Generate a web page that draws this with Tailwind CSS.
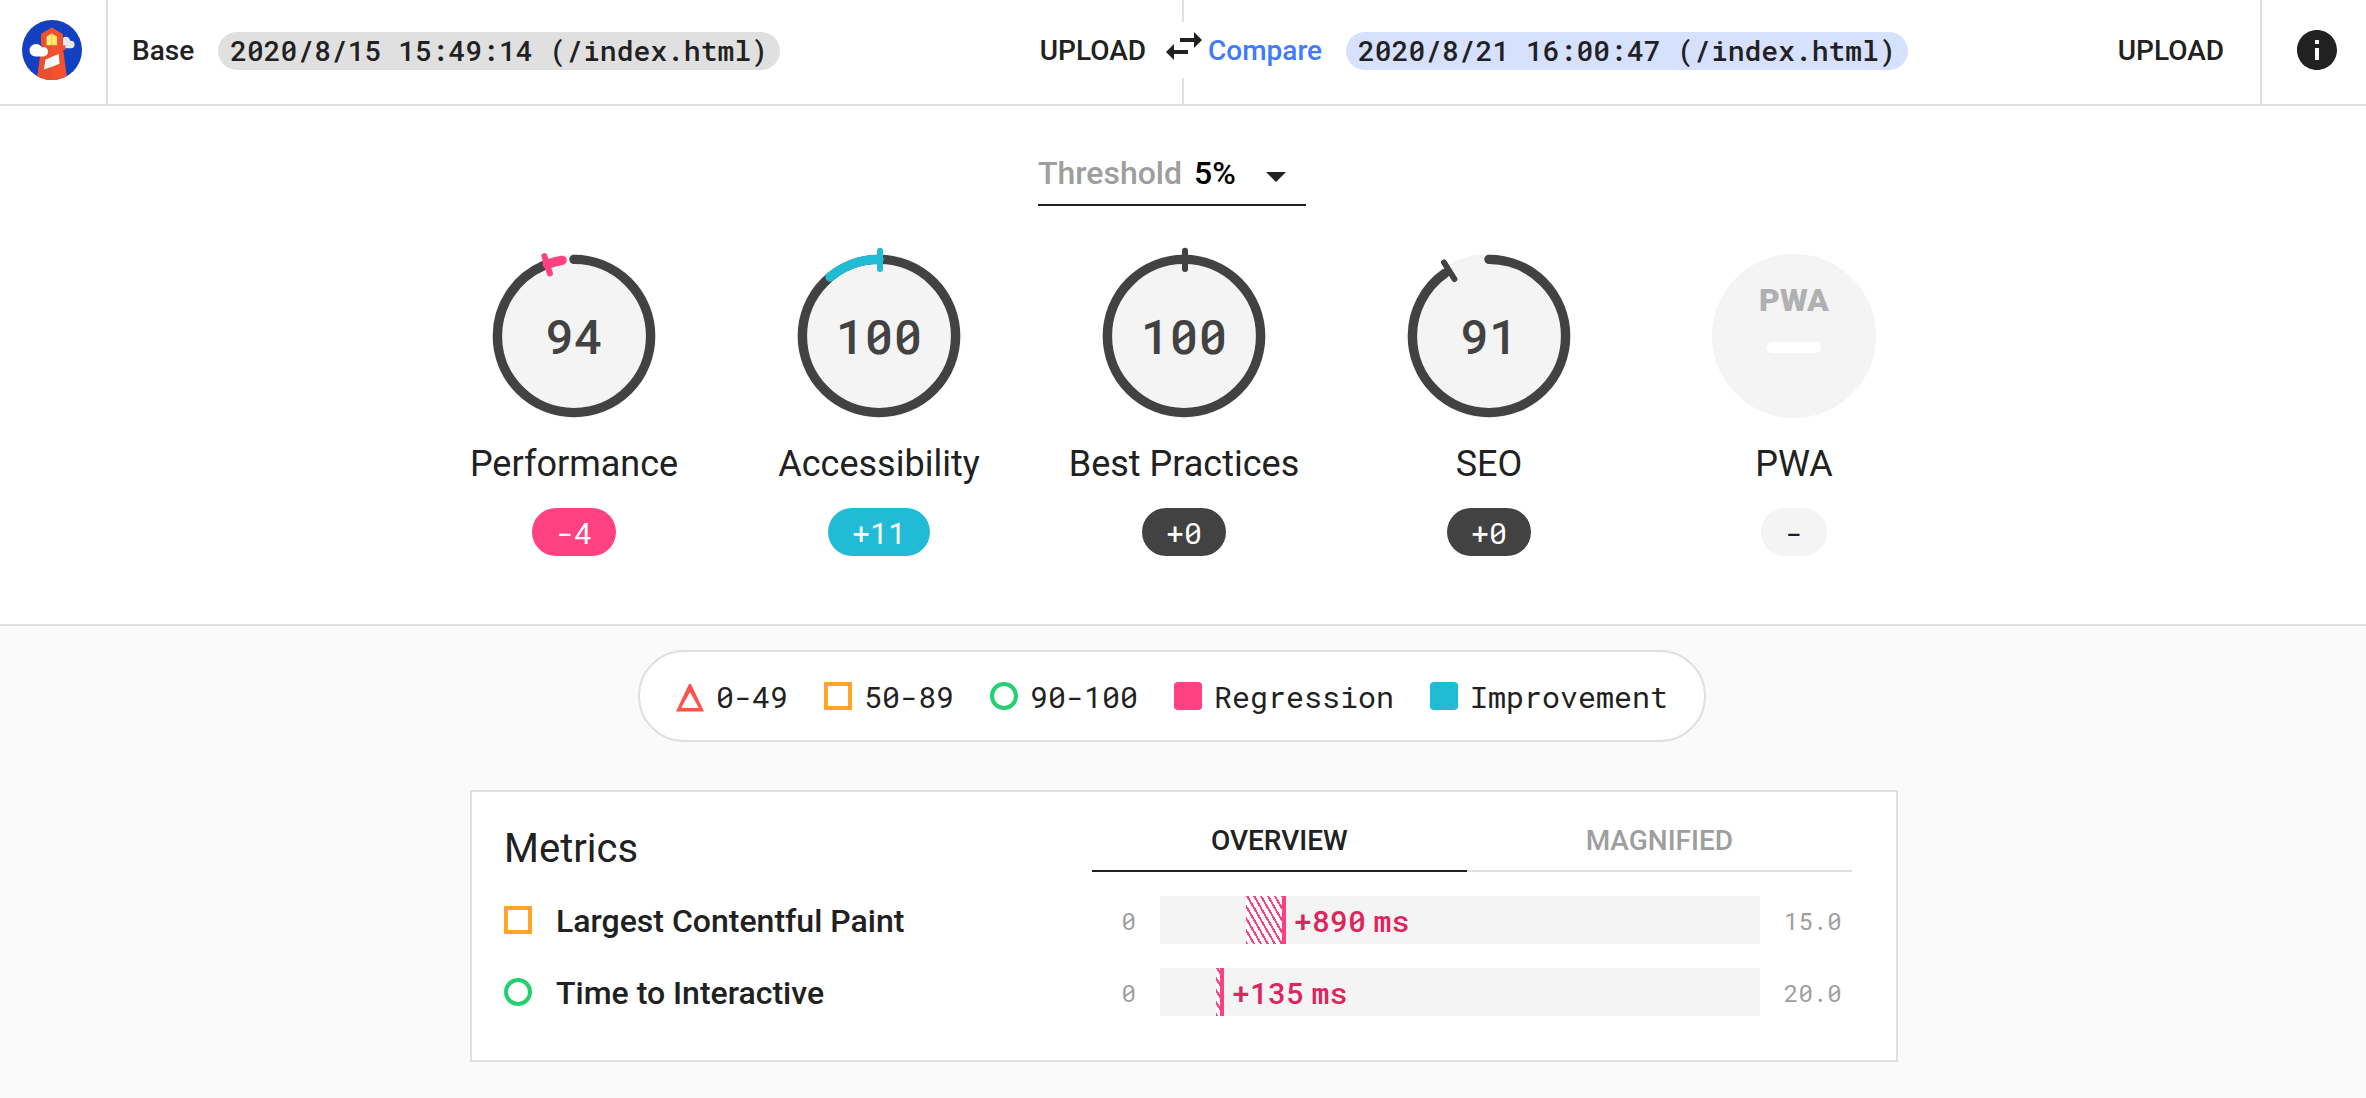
<!DOCTYPE html>
<html lang="en">
<head>
<meta charset="utf-8">
<meta name="viewport" content="width=device-width, initial-scale=1">
<title>Lighthouse CI Diff</title>
<script src="https://cdn.jsdelivr.net/npm/@tailwindcss/browser@4"></script>
</head>
<body class="min-h-screen bg-[#fafafa] font-['Roboto',sans-serif] text-[#212121]">

<header class="grid h-[106px] grid-cols-[108px_1fr_1fr_106px] border-b-2 border-[#e0e0e0] bg-white text-[28px] leading-8 font-medium">
  <a href="#" aria-label="Home" class="flex items-center justify-center border-r-2 border-[#e0e0e0] pr-0.5 pb-1">
    <svg class="size-15" viewBox="38 31 176 176" aria-hidden="true">
      <clipPath id="disc"><circle cx="126" cy="119" r="88"/></clipPath>
      <g clip-path="url(#disc)">
        <rect x="38" y="31" width="176" height="176" fill="#1340c0"/>
        <path d="M158 84a12 12 0 0 1 21 8 11 11 0 0 1 4 22h-25z" fill="#e6e8ee"/>
        <path d="M94 72l32-19 32 19v33h7v14h-6l12 90H81l13-90z" fill="#f4512f"/>
        <path d="M94 72l32-19v156H81l13-90z" fill="#e8502f"/>
        <path d="M110 80l15-10v35h-15z" fill="#fff176"/>
        <path d="M125 70l16 10v25h-16z" fill="#ffe76a"/>
        <path d="M107 147l19-8v29l-24 8z" fill="#f4f4f4"/>
        <path d="M126 139l20-8 2 28-22 9z" fill="#fff"/>
        <path d="M60 121a19 19 0 0 1 36-9 12 12 0 0 1 18 12 13 13 0 0 1-13 14H77a18 18 0 0 1-17-17z" fill="#fff"/>
      </g>
    </svg>
  </a>

  <div class="flex items-center border-r-2 border-[#e0e0e0] pr-9 pb-0.5 pl-6">
    <span>Base</span>
    <span class="ml-6 h-[38px] rounded-full bg-[#e0e0e0] px-3 font-['Roboto_Mono','DejaVu_Sans_Mono',monospace] leading-[38px] font-medium">2020/8/15 15:49:14 (/index.html)</span>
    <button class="ml-auto">UPLOAD</button>
  </div>

  <div class="relative flex items-center pr-9 pb-0.5 pl-6">
    <button aria-label="Swap base and compare" class="absolute top-[22px] -left-6 h-14 w-12 bg-white">
      <svg class="-mt-2 size-12" viewBox="0 0 24 24" fill="#212121" aria-hidden="true"><path d="M6.99 11L3 15l3.99 4v-3H14v-2H6.99v-3zM21 9l-3.99-4v3H10v2h7.01v3L21 9z"/></svg>
    </button>
    <span class="relative text-[#4179ff]">Compare</span>
    <span class="ml-6 h-[38px] rounded-full bg-[#d6e0ff] px-3 font-['Roboto_Mono','DejaVu_Sans_Mono',monospace] leading-[38px] font-medium">2020/8/21 16:00:47 (/index.html)</span>
    <button class="ml-auto">UPLOAD</button>
  </div>

  <div class="flex items-center justify-end border-l-2 border-[#e0e0e0] pr-[25px] pb-1">
    <button aria-label="About">
      <svg class="size-12" viewBox="0 0 24 24" fill="#212121" aria-hidden="true"><path d="M12 2C6.48 2 2 6.48 2 12s4.48 10 10 10 10-4.48 10-10S17.52 2 12 2zm1 15h-2v-6h2v6zm0-8h-2V7h2v2z"/></svg>
    </button>
  </div>
</header>

<section class="flex flex-col items-center border-b-2 border-[#e0e0e0] bg-white pt-9 pb-17 pl-0.5">
  <div class="mr-6 flex h-16 w-67 items-center border-b-2 border-[#212121] text-[32px] leading-10 font-medium">
    <label for="threshold" class="text-[#9e9e9e]">Threshold</label>
    <div class="grid flex-1 items-center pl-3">
      <select id="threshold" class="col-start-1 row-start-1 w-full appearance-none bg-transparent font-medium text-black">
        <option>5%</option>
        <option>10%</option>
        <option>15%</option>
      </select>
      <svg class="pointer-events-none col-start-1 row-start-1 mt-2 mr-5 h-2.5 w-5 justify-self-end" viewBox="0 0 20 10" fill="#212121" aria-hidden="true"><path d="M0 0h20L10 10z"/></svg>
    </div>
  </div>

  <div class="mt-12 flex w-full max-w-[1428px] justify-between text-[36px] leading-[44px]">
    <div class="flex w-52 flex-col items-center">
      <div class="grid size-41 place-items-center">
        <svg class="col-start-1 row-start-1 size-41 overflow-visible" viewBox="-82 -82 164 164" fill="none" stroke-linecap="round" aria-hidden="true">
          <circle r="82" fill="#f4f4f4"/>
          <g transform="rotate(-90)" stroke-width="9.4">
            <circle r="76.6" pathLength="100" stroke="#424242" stroke-dasharray="93.5 100"/>
            <circle r="76.6" pathLength="100" stroke="#ff4081" stroke-dasharray="3.2 100" stroke-dashoffset="-94.3"/>
          </g>
          <path d="M-29.6 -79.8L-24.1 -62.5" stroke="#ff4081" stroke-width="6"/>
        </svg>
        <span class="col-start-1 row-start-1 font-['Roboto_Mono','DejaVu_Sans_Mono',monospace] text-[48px] leading-[56px] font-medium text-[#424242]">94</span>
      </div>
      <h2 class="mt-6">Performance</h2>
      <span class="mt-[22px] h-12 rounded-full bg-[#ff4081] px-6 font-['Roboto_Mono','DejaVu_Sans_Mono',monospace] text-[30px] leading-[50px] text-white">-4</span>
    </div>

    <div class="flex w-52 flex-col items-center">
      <div class="grid size-41 place-items-center">
        <svg class="col-start-1 row-start-1 size-41 overflow-visible" viewBox="-82 -82 164 164" fill="none" stroke-linecap="round" aria-hidden="true">
          <circle r="82" fill="#f4f4f4"/>
          <g transform="rotate(-90)" stroke-width="9.4">
            <circle r="76.6" stroke="#424242"/>
            <circle r="76.6" pathLength="100" stroke="#21bbd5" stroke-dasharray="11 100" stroke-dashoffset="-89"/>
          </g>
          <path d="M1 -85.3V-67" stroke="#21bbd5" stroke-width="6"/>
        </svg>
        <span class="col-start-1 row-start-1 font-['Roboto_Mono','DejaVu_Sans_Mono',monospace] text-[48px] leading-[56px] font-medium text-[#424242]">100</span>
      </div>
      <h2 class="mt-6">Accessibility</h2>
      <span class="mt-[22px] h-12 rounded-full bg-[#21bbd5] px-6 font-['Roboto_Mono','DejaVu_Sans_Mono',monospace] text-[30px] leading-[50px] text-white">+11</span>
    </div>

    <div class="flex w-52 flex-col items-center">
      <div class="grid size-41 place-items-center">
        <svg class="col-start-1 row-start-1 size-41 overflow-visible" viewBox="-82 -82 164 164" fill="none" stroke-linecap="round" aria-hidden="true">
          <circle r="82" fill="#f4f4f4"/>
          <circle r="76.6" stroke="#424242" stroke-width="9.4"/>
          <path d="M1 -85.3V-67" stroke="#424242" stroke-width="6"/>
        </svg>
        <span class="col-start-1 row-start-1 font-['Roboto_Mono','DejaVu_Sans_Mono',monospace] text-[48px] leading-[56px] font-medium text-[#424242]">100</span>
      </div>
      <h2 class="mt-6 whitespace-nowrap">Best Practices</h2>
      <span class="mt-[22px] h-12 rounded-full bg-[#424242] px-6 font-['Roboto_Mono','DejaVu_Sans_Mono',monospace] text-[30px] leading-[50px] text-white">+0</span>
    </div>

    <div class="flex w-52 flex-col items-center">
      <div class="grid size-41 place-items-center">
        <svg class="col-start-1 row-start-1 size-41 overflow-visible" viewBox="-82 -82 164 164" fill="none" stroke-linecap="round" aria-hidden="true">
          <circle r="82" fill="#f4f4f4"/>
          <circle transform="rotate(-90)" r="76.6" pathLength="100" stroke="#424242" stroke-width="9.4" stroke-dasharray="90.2 100"/>
          <path d="M-45 -73.5L-34.6 -57" stroke="#424242" stroke-width="6"/>
        </svg>
        <span class="col-start-1 row-start-1 font-['Roboto_Mono','DejaVu_Sans_Mono',monospace] text-[48px] leading-[56px] font-medium text-[#424242]">91</span>
      </div>
      <h2 class="mt-6">SEO</h2>
      <span class="mt-[22px] h-12 rounded-full bg-[#424242] px-6 font-['Roboto_Mono','DejaVu_Sans_Mono',monospace] text-[30px] leading-[50px] text-white">+0</span>
    </div>

    <div class="flex w-52 flex-col items-center">
      <div class="flex size-41 flex-col items-center rounded-full bg-[#f4f4f4] pt-7">
        <span class="text-[32px] leading-9 font-black text-[#b0b0b0]">PWA</span>
        <span class="mt-6 h-[11px] w-[54px] rounded-full bg-white"></span>
      </div>
      <h2 class="mt-6">PWA</h2>
      <span class="mt-[22px] h-12 rounded-full bg-[#f4f4f4] px-6 font-['Roboto_Mono','DejaVu_Sans_Mono',monospace] text-[30px] leading-[50px]">-</span>
    </div>
  </div>
</section>

<main class="flex flex-col items-center pt-6 pb-9 pl-0.5">
  <ul class="mr-6 flex h-[92px] items-center gap-9 rounded-full border-2 border-[#e0e0e0] bg-white px-9 font-['Roboto_Mono','DejaVu_Sans_Mono',monospace] text-[30px] leading-10">
    <li class="flex items-center gap-3">
      <svg class="size-7 overflow-visible" viewBox="0 0 28 28" aria-hidden="true"><path fill="#ff5349" fill-rule="evenodd" d="M13 2h2l13 27.600H0zM14 10L5.200 26h17.600z"/></svg><span class="pt-0.5">0-49</span></li>
    <li class="flex items-center gap-3"><span class="size-7 border-4 border-[#ffa42b]"></span><span class="pt-0.5">50-89</span></li>
    <li class="flex items-center gap-3"><span class="size-7 rounded-full border-4 border-[#23cf6f]"></span><span class="pt-0.5">90-100</span></li>
    <li class="flex items-center gap-3"><span class="size-7 rounded-sm bg-[#ff4081]"></span><span class="pt-0.5">Regression</span></li>
    <li class="flex items-center gap-3"><span class="size-7 rounded-sm bg-[#21bbd5]"></span><span class="pt-0.5">Improvement</span></li>
  </ul>

  <section class="mt-12 grid w-full max-w-[1428px] grid-cols-[588fr_760fr] gap-y-6 border-2 border-[#e0e0e0] bg-white pt-6 pr-11 pb-11 pl-8 text-[32px] leading-10 font-medium">
    <h2 class="pt-3 text-[40px] leading-[42px] font-normal">Metrics</h2>
    <div role="tablist" class="flex h-14 text-[28px] leading-8">
      <button role="tab" aria-selected="true" class="flex-auto border-b-2 border-[#212121] pb-1">OVERVIEW</button>
      <button role="tab" aria-selected="false" class="flex-auto border-b-2 border-[#e0e0e0] pb-1 text-[#9e9e9e]">MAGNIFIED</button>
    </div>

    <h3 class="flex items-center gap-6"><span class="size-7 border-4 border-[#ffa42b]"></span><span class="pt-0.5">Largest Contentful Paint</span></h3>
    <div class="flex h-12 items-center font-['Roboto_Mono','DejaVu_Sans_Mono',monospace] text-[24px] font-normal text-[#9e9e9e]">
      <span class="w-17 pt-0.5 pr-6 text-right">0</span>
      <div class="flex h-12 flex-1 bg-[#f4f4f4]">
        <span style="width:14.333%"></span>
        <span class="border-r-4 border-[#ff4081] bg-[repeating-linear-gradient(60deg,#ff4081_0_2px,#fff_2px_6px)]" style="width:6.667%"></span>
        <span class="ml-2 font-['Roboto'] text-[30px] leading-[50px] font-medium text-[#e0245e]"><span class="font-['Roboto_Mono','DejaVu_Sans_Mono',monospace]">+890</span> <span class="font-['Roboto_Mono','DejaVu_Sans_Mono',monospace]">ms</span></span>
      </div>
      <span class="w-23 pt-0.5 pl-6">15.0</span>
    </div>

    <h3 class="flex items-center gap-6"><span class="size-7 rounded-full border-4 border-[#23cf6f]"></span><span class="pt-0.5">Time to Interactive</span></h3>
    <div class="flex h-12 items-center font-['Roboto_Mono','DejaVu_Sans_Mono',monospace] text-[24px] font-normal text-[#9e9e9e]">
      <span class="w-17 pt-0.5 pr-6 text-right">0</span>
      <div class="flex h-12 flex-1 bg-[#f4f4f4]">
        <span style="width:9.333%"></span>
        <span class="border-r-4 border-[#ff4081] bg-[repeating-linear-gradient(60deg,#ff4081_0_2px,#fff_2px_6px)]" style="width:1.333%"></span>
        <span class="ml-2 font-['Roboto'] text-[30px] leading-[50px] font-medium text-[#e0245e]"><span class="font-['Roboto_Mono','DejaVu_Sans_Mono',monospace]">+135</span> <span class="font-['Roboto_Mono','DejaVu_Sans_Mono',monospace]">ms</span></span>
      </div>
      <span class="w-23 pt-0.5 pl-6">20.0</span>
    </div>
  </section>
</main>
</body>
</html>
